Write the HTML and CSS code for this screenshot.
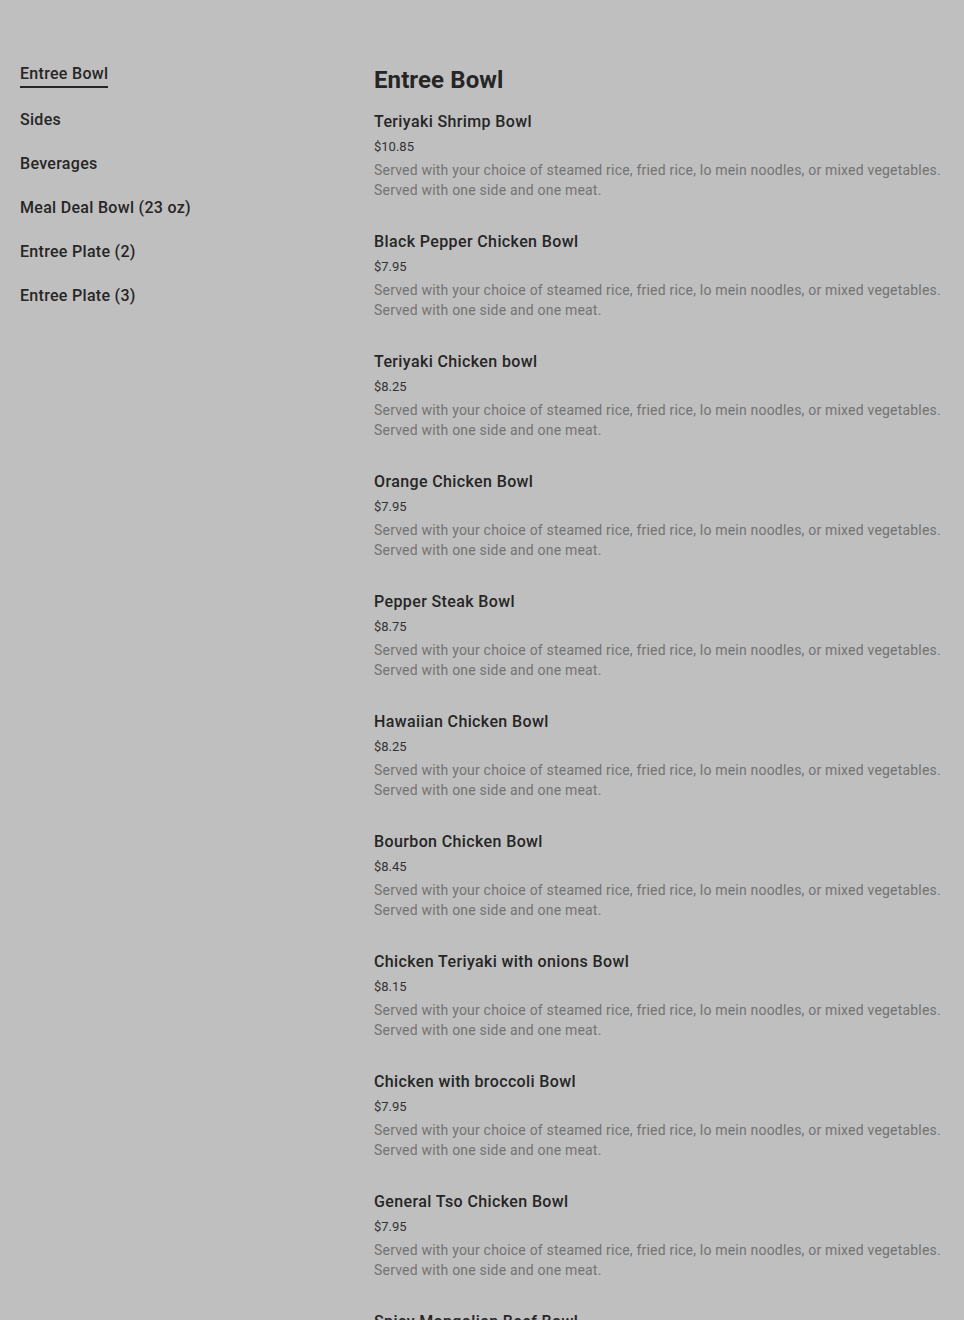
FILE: index.html
```html
<!DOCTYPE html>
<html lang="en">
<head>
<meta charset="UTF-8" />
<meta name="viewport" content="width=device-width, initial-scale=1" />
<title>Menu - Entree Bowl</title>
<link rel="stylesheet" href="styles.css">
</head>
<body>
  <div class="page">
    <nav class="sidebar">
      <a class="nav-link active" href="#">Entree Bowl</a>
      <a class="nav-link" href="#">Sides</a>
      <a class="nav-link" href="#">Beverages</a>
      <a class="nav-link" href="#">Meal Deal Bowl (23 oz)</a>
      <a class="nav-link" href="#">Entree Plate (2)</a>
      <a class="nav-link" href="#">Entree Plate (3)</a>
    </nav>

    <main class="menu">
      <h2 class="menu-title">Entree Bowl</h2>

      <div class="item">
        <h3 class="item-name">Teriyaki Shrimp Bowl</h3>
        <div class="item-price">$10.85</div>
        <p class="item-desc">Served with your choice of steamed rice, fried rice, lo mein noodles, or mixed vegetables. Served with one side and one meat.</p>
      </div>
      <div class="item">
        <h3 class="item-name">Black Pepper Chicken Bowl</h3>
        <div class="item-price">$7.95</div>
        <p class="item-desc">Served with your choice of steamed rice, fried rice, lo mein noodles, or mixed vegetables. Served with one side and one meat.</p>
      </div>
      <div class="item">
        <h3 class="item-name">Teriyaki Chicken bowl</h3>
        <div class="item-price">$8.25</div>
        <p class="item-desc">Served with your choice of steamed rice, fried rice, lo mein noodles, or mixed vegetables. Served with one side and one meat.</p>
      </div>
      <div class="item">
        <h3 class="item-name">Orange Chicken Bowl</h3>
        <div class="item-price">$7.95</div>
        <p class="item-desc">Served with your choice of steamed rice, fried rice, lo mein noodles, or mixed vegetables. Served with one side and one meat.</p>
      </div>
      <div class="item">
        <h3 class="item-name">Pepper Steak Bowl</h3>
        <div class="item-price">$8.75</div>
        <p class="item-desc">Served with your choice of steamed rice, fried rice, lo mein noodles, or mixed vegetables. Served with one side and one meat.</p>
      </div>
      <div class="item">
        <h3 class="item-name">Hawaiian Chicken Bowl</h3>
        <div class="item-price">$8.25</div>
        <p class="item-desc">Served with your choice of steamed rice, fried rice, lo mein noodles, or mixed vegetables. Served with one side and one meat.</p>
      </div>
      <div class="item">
        <h3 class="item-name">Bourbon Chicken Bowl</h3>
        <div class="item-price">$8.45</div>
        <p class="item-desc">Served with your choice of steamed rice, fried rice, lo mein noodles, or mixed vegetables. Served with one side and one meat.</p>
      </div>
      <div class="item">
        <h3 class="item-name">Chicken Teriyaki with onions Bowl</h3>
        <div class="item-price">$8.15</div>
        <p class="item-desc">Served with your choice of steamed rice, fried rice, lo mein noodles, or mixed vegetables. Served with one side and one meat.</p>
      </div>
      <div class="item">
        <h3 class="item-name">Chicken with broccoli Bowl</h3>
        <div class="item-price">$7.95</div>
        <p class="item-desc">Served with your choice of steamed rice, fried rice, lo mein noodles, or mixed vegetables. Served with one side and one meat.</p>
      </div>
      <div class="item">
        <h3 class="item-name">General Tso Chicken Bowl</h3>
        <div class="item-price">$7.95</div>
        <p class="item-desc">Served with your choice of steamed rice, fried rice, lo mein noodles, or mixed vegetables. Served with one side and one meat.</p>
      </div>
      <div class="item">
        <h3 class="item-name">Spicy Mongolian Beef Bowl</h3>
        <div class="item-price">$8.95</div>
        <p class="item-desc">Served with your choice of steamed rice, fried rice, lo mein noodles, or mixed vegetables. Served with one side and one meat.</p>
      </div>
    </main>
  </div>
</body>
</html>
```

FILE: styles.css
```css
body {
  font-family: Roboto, "Liberation Sans", sans-serif;
  background: #bfbfbf;
  color: #262626;
  margin: 0;
}
.page {
  display: flex;
  padding: 62px 20px 0 20px;
}
.sidebar {
  width: 354px;
  flex-shrink: 0;
  display: flex;
  flex-direction: column;
  gap: 20px;
}
.nav-link {
  align-self: flex-start;
  color: #262626;
  text-decoration: none;
  font-size: 16px;
  font-weight: 500;
  line-height: 24px;
  letter-spacing: 0.3px;
}
.nav-link.active {
  border-bottom: 2px solid #262626;
}
.menu {
  flex: 1;
}
.menu-title {
  font-size: 24px;
  font-weight: 700;
  line-height: 32px;
  margin: 2px 0 12px 0;
  letter-spacing: 0.1px;
}
.item {
  padding: 4px 0;
  height: 112px;
}
.item-name {
  font-size: 16px;
  font-weight: 500;
  line-height: 20px;
  letter-spacing: 0.38px;
  margin: 0 0 5px 0;
}
.item-price {
  font-size: 13px;
  line-height: 20px;
  color: #333;
}
.item-desc {
  font-size: 14px;
  line-height: 20px;
  letter-spacing: 0.2px;
  color: #737373;
  margin: 3px 0 0 0;
  max-width: 580px;
}
```
